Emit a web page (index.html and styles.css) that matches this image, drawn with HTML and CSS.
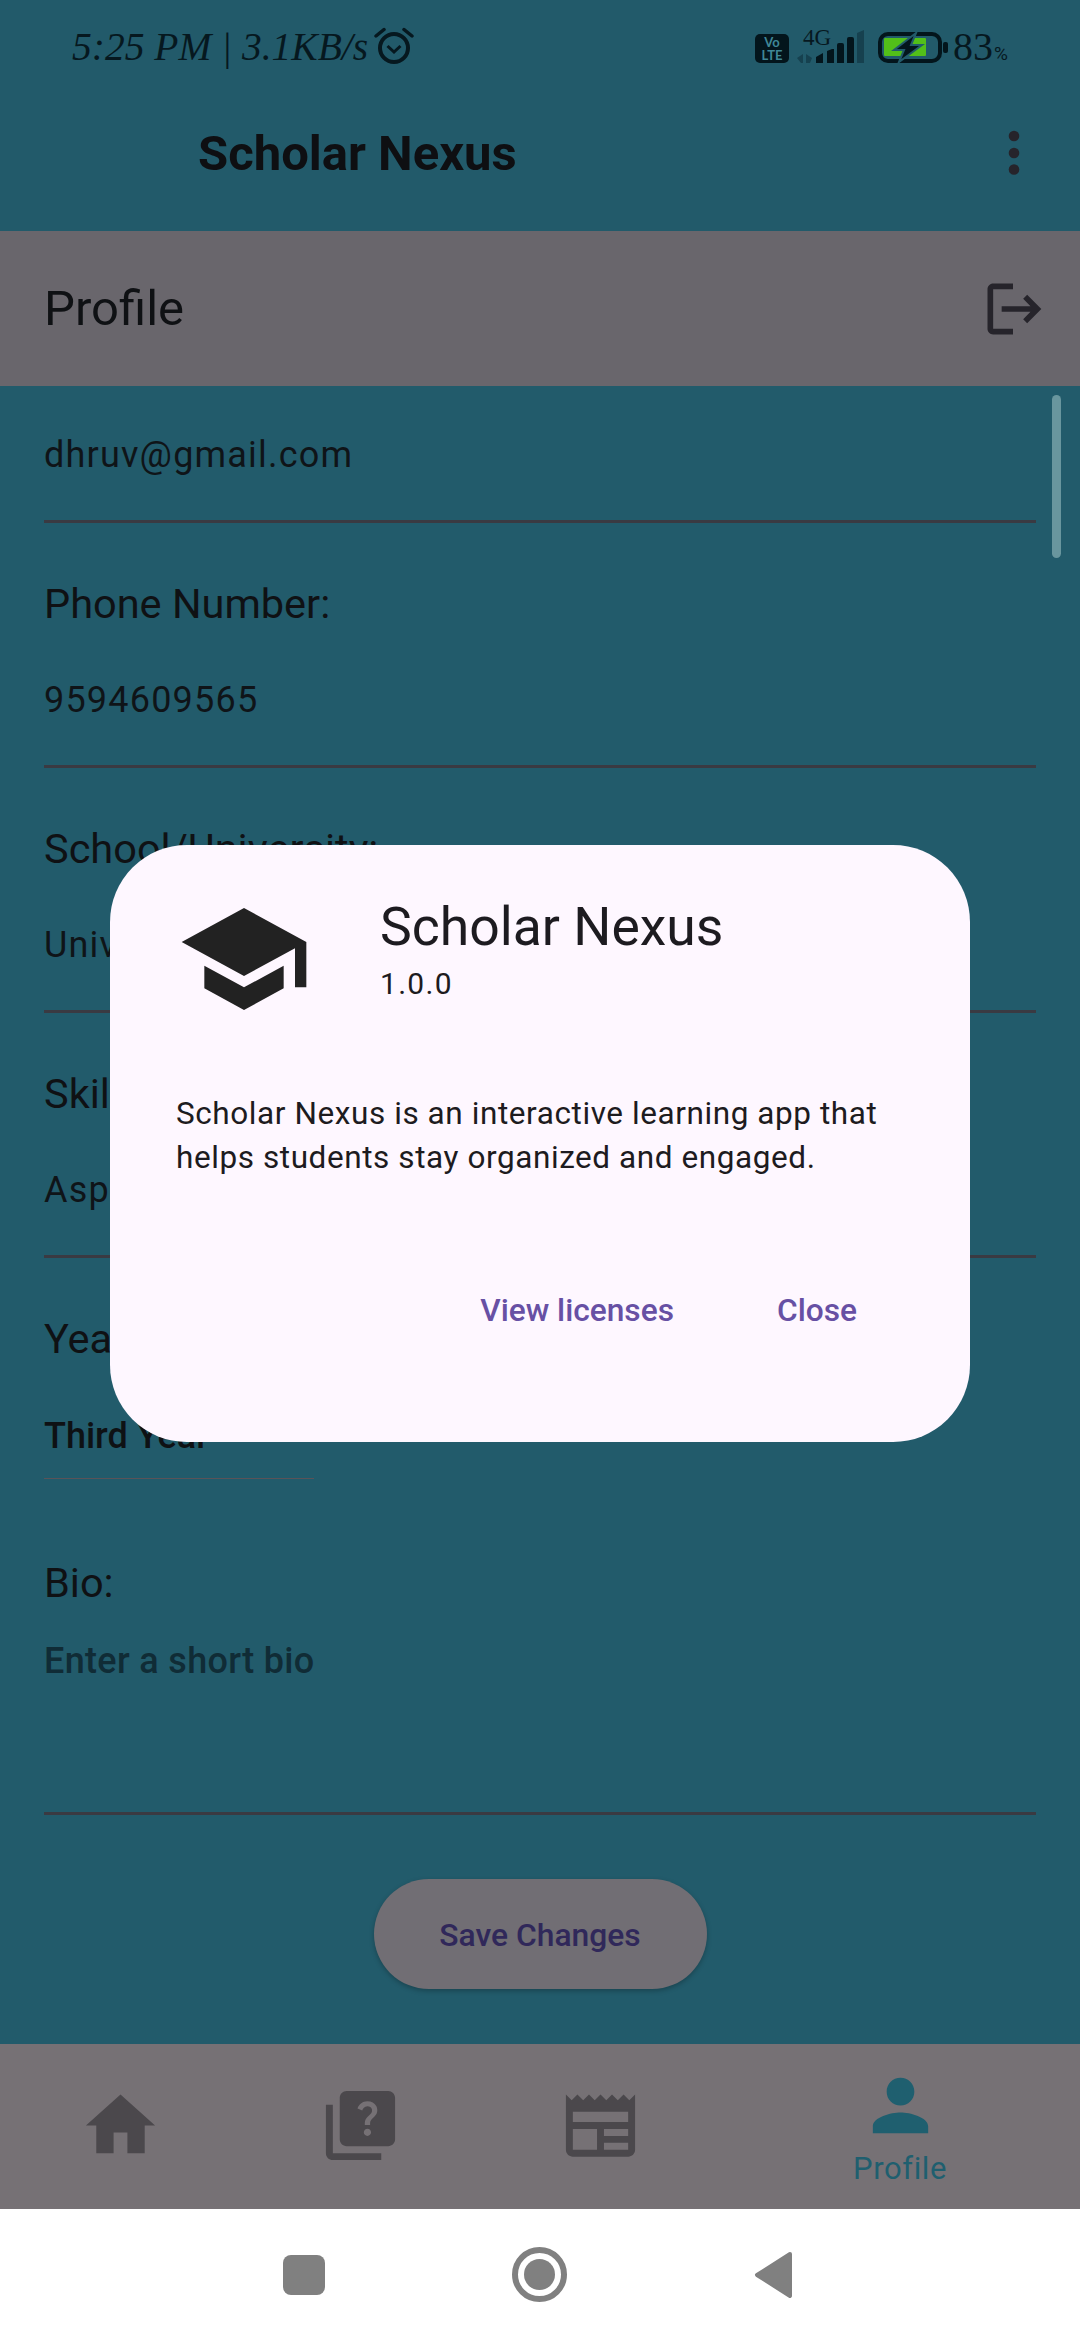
FILE: index.html
```html
<!DOCTYPE html>
<html lang="en">
<head>
<meta charset="utf-8">
<title>Scholar Nexus</title>
<link rel="stylesheet" href="styles.css">
</head>
<body>
<div class="screen">
  <header class="top">
    <div class="status">
      <div class="status-left">
        <span class="clock">5:25 PM | 3.1KB/s</span>
        <svg class="alarm" viewBox="0 0 40 38"><circle cx="20" cy="21" r="14" fill="none" stroke-width="4"/><path d="M13.5 19l6.5 6 6.500-6" fill="none" stroke-width="3"/><path d="M2 9l8-6.500M38 9l-8-6.500" fill="none" stroke-width="3.500" stroke-linecap="round"/></svg>
      </div>
      <div class="status-right">
        <svg class="volte" viewBox="0 0 34 29"><rect width="34" height="29" rx="5" class="dark"/><text x="17" y="13" class="volte-t">Vo</text><text x="17" y="26" class="volte-t">LTE</text></svg>
        <svg class="signal" viewBox="0 -6 70 42"><text x="8" y="18" class="four-g">4G</text><path class="dim" d="M2 31l6-4v9H6zM11 27l6 4-2 5h-4z"/><path class="dark" d="M21 30l7-4v10h-7zM32 24l5-2h2v14h-7zM42 18q0-2 2-2h3q2 0 2 2v18h-7zM52 12q0-2 2-2h3q2 0 2 2v24h-7z"/><path class="dim" d="M62 6l7-3v33h-7z"/></svg>
        <svg class="battery" viewBox="0 0 70 31"><rect x="2" y="2" width="60" height="27" rx="8" fill="none" class="dark-stroke" stroke-width="4"/><rect x="6" y="6" width="42" height="18" rx="1" class="green"/><rect x="65" y="10" width="5" height="11" rx="2" class="dark"/><path class="bolt" d="M38 1L16 18h10l-5 12 23-17H33z"/></svg>
        <span class="pct">83<small>%</small></span>
      </div>
    </div>
    <div class="appbar">
      <span class="app-title">Scholar Nexus</span>
      <svg class="dots" viewBox="0 0 12 46"><circle cx="6" cy="6" r="5.300"/><circle cx="6" cy="23" r="5.300"/><circle cx="6" cy="39.500" r="5.300"/></svg>
    </div>
  </header>

  <div class="profile-bar">
    <span class="profile-title">Profile</span>
    <svg class="logout" viewBox="0 0 24 24"><path d="M17 7l-1.410 1.410L18.170 11H8v2h10.170l-2.580 2.580L17 17l5-5zM5 5h7V3H5c-1.100 0-2 .9-2 2v14c0 1.100.9 2 2 2h7v-2H5V5z"/></svg>
  </div>

  <main class="form">
    <div class="field first"><div class="value">dhruv@gmail.com</div></div>
    <div class="field"><div class="label">Phone Number:</div><div class="value">9594609565</div></div>
    <div class="field"><div class="label">School/University:</div><div class="value">University</div></div>
    <div class="field"><div class="label">Skills:</div><div class="value">Aspiring</div></div>
    <div class="year">
      <div class="label">Year:</div>
      <div class="year-value">Third Year</div>
    </div>
    <div class="bio">
      <div class="label">Bio:</div>
      <div class="placeholder">Enter a short bio</div>
    </div>
    <button class="save">Save Changes</button>
    <div class="scrollbar"></div>
  </main>

  <nav class="tabs">
    <div class="tab"><svg class="tab-icon" viewBox="0 0 24 24"><path d="M10 20v-6h4v6h5v-8h3L12 3 2 12h3v8z"/></svg></div>
    <div class="tab"><svg class="tab-icon" viewBox="0 0 24 24"><path d="M4 6H2v14c0 1.100.9 2 2 2h14v-2H4V6zm16-4H8c-1.100 0-2 .9-2 2v12c0 1.100.9 2 2 2h12c1.100 0 2-.9 2-2V4c0-1.100-.9-2-2-2zm-5.990 13c-.59 0-1.050-.47-1.050-1.050 0-.59.47-1.040 1.050-1.040.59 0 1.040.45 1.040 1.040-.01.58-.45 1.050-1.040 1.050zm2.500-6.170c-.63.93-1.230 1.210-1.560 1.810-.13.24-.18.4-.18 1.180h-1.520c0-.41-.06-1.080.26-1.650.41-.73 1.180-1.160 1.630-1.800.48-.68.21-1.940-1.140-1.940-.88 0-1.320.67-1.500 1.230l-1.370-.57C11.510 5.960 12.520 5 13.990 5c1.230 0 2.080.56 2.510 1.260.37.61.58 1.730.01 2.570z"/></svg></div>
    <div class="tab"><svg class="tab-icon" viewBox="0 0 24 24"><path d="M22 3l-1.670 1.670L18.670 3 17 4.670 15.330 3l-1.660 1.670L12 3l-1.670 1.670L8.670 3 7 4.670 5.330 3 3.670 4.670 2 3v16c0 1.100.9 2 2 2h16c1.100 0 2-.9 2-2V3zM11 19H4v-6h7v6zm9 0h-7v-2h7v2zm0-4h-7v-2h7v2zm0-4H4V8h16v3z"/></svg></div>
    <div class="tab tab-active"><svg class="tab-icon" viewBox="0 0 24 24"><path d="M12 12c2.210 0 4-1.790 4-4s-1.790-4-4-4-4 1.790-4 4 1.790 4 4 4zm0 2c-2.670 0-8 1.340-8 4v2h16v-2c0-2.660-5.330-4-8-4z"/></svg><span class="tab-label">Profile</span></div>
  </nav>

  <div class="sysnav">
    <span class="sys-square"></span>
    <span class="sys-home"><span class="sys-disc"></span></span>
    <svg class="sys-back" viewBox="0 0 39 46"><path d="M36 2L3 23l33 21z" stroke-width="4" stroke-linejoin="round"/></svg>
  </div>

  <section class="dialog">
    <div class="dialog-head">
      <svg class="school" viewBox="0 0 24 24"><path d="M5 13.180v4L12 21l7-3.820v-4L12 17l-7-3.820zM12 3L1 9l11 6 9-4.910V17h2V9L12 3z"/></svg>
      <div class="dialog-names">
        <div class="dialog-title">Scholar Nexus</div>
        <div class="dialog-version">1.0.0</div>
      </div>
    </div>
    <p class="dialog-body">Scholar Nexus is an interactive learning app that<br>helps students stay organized and engaged.</p>
    <div class="dialog-actions">
      <span class="action">View licenses</span>
      <span class="action">Close</span>
    </div>
  </section>
</div>
</body>
</html>
```
FILE: styles.css
```css
* { box-sizing: border-box; }
html, body { margin: 0; padding: 0; }
body { font-family: Roboto, "Liberation Sans", sans-serif; }

.screen {
  position: relative;
  width: 1080px;
  height: 2340px;
  display: flex;
  flex-direction: column;
  overflow: hidden;
  background: #225b6b;
  color: #0f1215;
}

/* Header */
.top { height: 231px; display: flex; flex-direction: column; background: #225a6a; }
.status {
  height: 92px;
  display: flex;
  align-items: center;
  justify-content: space-between;
  padding: 0 72px;
}
.status-left { display: flex; align-items: center; gap: 6px; }
.clock {
  font-family: "Liberation Serif", serif;
  font-style: italic;
  font-size: 39.500px;
  line-height: 48px;
  padding-top: 2px;
  color: #06181f;
  white-space: nowrap;
}
.alarm { width: 40px; height: 38px; }
.alarm * { stroke: #06181f; }
.status-right { display: flex; align-items: center; }
.volte { width: 34px; height: 29px; margin-top: 4px; }
.dark { fill: #03151c; }
.dark-stroke { stroke: #03151c; }
.dim { fill: #16414f; }
.green { fill: #52bf19; }
.bolt { fill: #03151c; stroke: #225a6a; stroke-width: 2; }
.volte-t { font: 700 13px Lato, Roboto, sans-serif; fill: #3f8797; text-anchor: middle; }
.four-g { font: 23px "Liberation Serif", serif; fill: #06181f; }
.signal { width: 70px; height: 42px; margin: 0 0 8px 6px; }
.battery { width: 70px; height: 31px; margin-left: 13px; margin-top: 3px; }
.pct {
  font-family: "Liberation Serif", serif;
  font-size: 40px;
  color: #06181f;
  margin-left: 5px;
  white-space: nowrap;
}
.pct small { font-family: Roboto, sans-serif; font-size: 19px; margin-left: 1px; }

.appbar {
  height: 122px;
  display: flex;
  align-items: center;
  justify-content: space-between;
  padding: 0 60px 0 198px;
}
.app-title { font-size: 49px; font-weight: 700; color: #0e0f12; }
.dots { width: 12px; height: 46px; fill: #26242b; }

/* Profile bar */
.profile-bar {
  height: 155px;
  display: flex;
  align-items: center;
  justify-content: space-between;
  padding: 0 33px 0 44px;
  background: #69666c;
}
.profile-title { font-size: 49px; color: #0f1114; }
.logout { width: 68px; height: 68px; fill: #26242b; }

/* Form */
.form {
  position: relative;
  flex: 1;
  display: flex;
  flex-direction: column;
  padding: 47px 44px 0;
}
.field { width: 992px; margin-top: 57px; padding-bottom: 43px; border-bottom: 3px solid #3a3a42; }
.field.first { margin-top: 0; }
.label { font-size: 41.500px; line-height: 48px; color: #0f1114; white-space: nowrap; }
.value { font-size: 36px; line-height: 44px; letter-spacing: 1.200px; color: #0f1418; white-space: nowrap; }
.label + .value { margin-top: 50px; }

.year { margin-top: 57px; }
.year-value {
  width: 270px;
  margin-top: 51px;
  padding-bottom: 20px;
  border-bottom: 1px solid #5a5358;
  font-size: 36px;
  font-weight: 500;
  line-height: 44px;
  white-space: nowrap;
  color: #0e1114;
}
.bio { width: 992px; margin-top: 80px; padding-bottom: 129px; border-bottom: 3px solid #3a3a42; }
.placeholder {
  margin-top: 32px;
  font-size: 36px;
  font-weight: 500;
  letter-spacing: .33px;
  line-height: 44px;
  color: #102c36;
}
.save {
  align-self: center;
  width: 333px;
  height: 110px;
  margin-top: 64px;
  padding: 2px 0 0;
  border: 0;
  border-radius: 55px;
  background: #716e74;
  box-shadow: 0 2px 5px rgba(0, 0, 0, .25);
  font-family: Roboto, sans-serif;
  font-size: 31.800px;
  font-weight: 500;
  color: #30285a;
}
.scrollbar {
  position: absolute;
  top: 9px;
  left: 1052px;
  width: 9px;
  height: 163px;
  border-radius: 5px;
  background: #69969e;
}

/* Bottom nav */
.tabs { height: 165px; display: flex; background: #767175; }
.tab { flex: 1; display: flex; flex-direction: column; align-items: center; justify-content: center; padding-bottom: 3px; }
.tab-active { flex: 1.500; justify-content: flex-start; padding: 20px 0 0; }
.tab-icon { width: 83px; height: 83px; fill: #4b484c; display: block; }
.tab-active .tab-icon { fill: #1f5f6f; }
.tab-label { margin-top: 4px; font-size: 31px; line-height: 36px; letter-spacing: .6px; color: #1f5f6f; }

/* System nav */
.sysnav {
  height: 131px;
  display: flex;
  align-items: center;
  justify-content: center;
  gap: 187px;
  padding-right: 4px;
  background: #fff;
}
.sys-square { width: 42px; height: 40px; border-radius: 8px; background: #808080; }
.sys-home {
  width: 55px;
  height: 55px;
  display: flex;
  align-items: center;
  justify-content: center;
  border: 6px solid #808080;
  border-radius: 50%;
}
.sys-disc { width: 31px; height: 31px; border-radius: 50%; background: #808080; }
.sys-back { width: 39px; height: 46px; fill: #808080; stroke: #808080; }

/* Dialog */
.dialog {
  position: absolute;
  left: 110px;
  top: 845px;
  width: 860px;
  height: 597px;
  padding: 46px 114px 0 66px;
  border-radius: 77px;
  background: #fef7ff;
  color: #1d1b20;
}
.dialog-head { display: flex; gap: 68px; }
.school { width: 136px; height: 136px; fill: #222; flex: none; }
.dialog-names { margin-top: 5px; }
.dialog-title { font-size: 53.500px; line-height: 62px; white-space: nowrap; }
.dialog-version { margin-top: 8px; font-size: 30px; line-height: 36px; letter-spacing: 1.300px; }
.dialog-body { margin: 65px 0 0; font-size: 31.500px; line-height: 44px; letter-spacing: .58px; white-space: nowrap; }
.dialog-actions { margin-top: 111px; display: flex; justify-content: flex-end; gap: 103px; padding-right: 0; margin-right: -1px; }
.action { font-size: 31.700px; font-weight: 500; line-height: 39px; color: #6750a4; }
```
